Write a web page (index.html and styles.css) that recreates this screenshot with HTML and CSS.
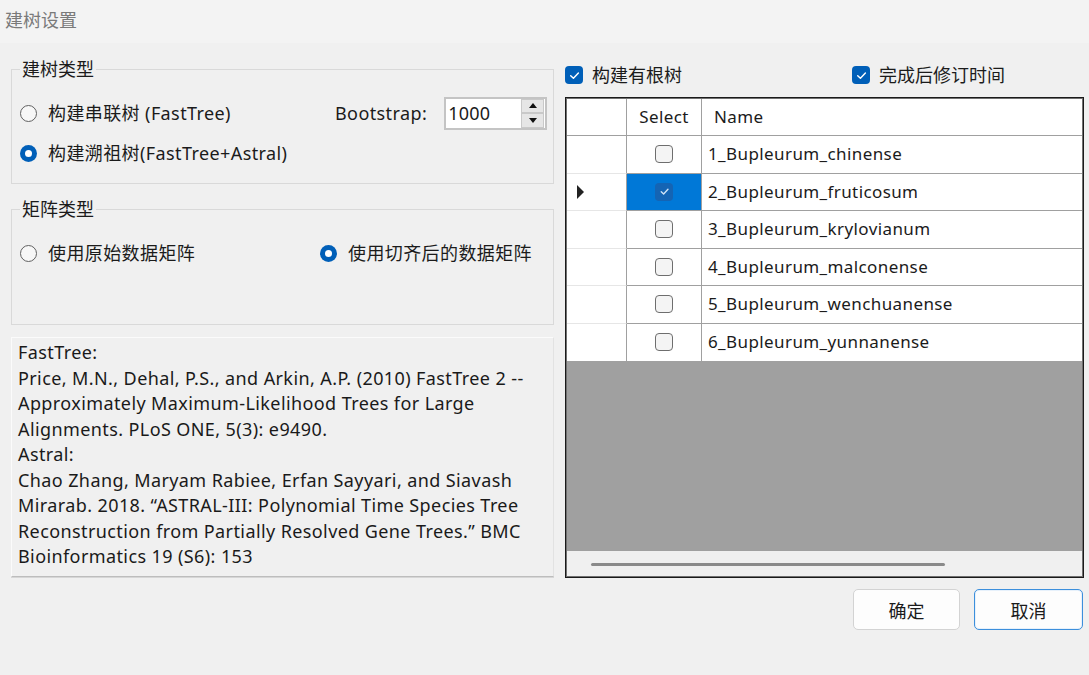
FILE: index.html
```html
<!DOCTYPE html>
<html lang="zh">
<head>
<meta charset="utf-8">
<title>建树设置</title>
<link rel="stylesheet" href="styles.css">
</head>
<body>
<div class="titlebar">建树设置</div>
<div class="main">
  <div class="left">
    <fieldset class="group g1">
      <legend>建树类型</legend>
      <div class="g1-grid">
        <label class="opt"><span class="radio"></span>构建串联树 (FastTree)</label>
        <span class="bs-label">Bootstrap:</span>
        <div class="spin">
          <span class="spin-val">1000</span>
          <div class="spin-btns">
            <span class="spin-btn"><span class="tri up"></span></span>
            <span class="spin-btn"><span class="tri down"></span></span>
          </div>
        </div>
        <label class="opt"><span class="radio on"></span>构建溯祖树(FastTree+Astral)</label>
      </div>
    </fieldset>
    <fieldset class="group g2">
      <legend>矩阵类型</legend>
      <div class="g2-grid">
        <label class="opt"><span class="radio"></span>使用原始数据矩阵</label>
        <label class="opt"><span class="radio on"></span>使用切齐后的数据矩阵</label>
      </div>
    </fieldset>
    <div class="refs">FastTree:<br>Price, M.N., Dehal, P.S., and Arkin, A.P. (2010) FastTree 2 --<br>Approximately Maximum-Likelihood Trees for Large<br>Alignments. PLoS ONE, 5(3): e9490.<br>Astral:<br>Chao Zhang, Maryam Rabiee, Erfan Sayyari, and Siavash<br>Mirarab. 2018. “ASTRAL-III: Polynomial Time Species Tree<br>Reconstruction from Partially Resolved Gene Trees.” BMC<br>Bioinformatics 19 (S6): 153</div>
  </div>
  <div class="right">
    <div class="checks">
      <label class="chk"><span class="cbox on"><svg viewBox="0 0 12 12"><polyline points="2.5,6.2 5,8.6 9.6,3.6"/></svg></span>构建有根树</label>
      <label class="chk"><span class="cbox on"><svg viewBox="0 0 12 12"><polyline points="2.5,6.2 5,8.6 9.6,3.6"/></svg></span>完成后修订时间</label>
    </div>
    <div class="grid">
      <div class="rows">
        <div class="rh hdr"></div><div class="cell sel hdr">Select</div><div class="cell name hdr hname">Name</div>

        <div class="rh"></div><div class="cell sel"><span class="gbox"></span></div><div class="cell name">1_Bupleurum_chinense</div>

        <div class="rh"><span class="arrow"></span></div><div class="cell sel current"><span class="gbox on"><svg viewBox="0 0 12 12"><polyline points="3,6.2 5.2,8.3 9.2,4"/></svg></span></div><div class="cell name">2_Bupleurum_fruticosum</div>

        <div class="rh"></div><div class="cell sel"><span class="gbox"></span></div><div class="cell name">3_Bupleurum_krylovianum</div>

        <div class="rh"></div><div class="cell sel"><span class="gbox"></span></div><div class="cell name">4_Bupleurum_malconense</div>

        <div class="rh"></div><div class="cell sel"><span class="gbox"></span></div><div class="cell name">5_Bupleurum_wenchuanense</div>

        <div class="rh"></div><div class="cell sel"><span class="gbox"></span></div><div class="cell name">6_Bupleurum_yunnanense</div>
      </div>
      <div class="empty"></div>
      <div class="hscroll"><span class="thumb"></span></div>
    </div>
    <div class="buttons">
      <button class="btn">确定</button>
      <button class="btn focus">取消</button>
    </div>
  </div>
</div>
</body>
</html>
```
FILE: styles.css
```css
* { box-sizing: border-box; }
html, body { margin: 0; padding: 0; }
body {
  width: 1089px;
  height: 675px;
  background: #f0f0f0;
  font-family: "Noto Sans", "Noto Sans CJK SC", sans-serif;
  font-size: 18px;
  letter-spacing: 0.4px;
  color: #1b1b1b;
  overflow: hidden;
}
.titlebar {
  height: 43px;
  background: #f3f3f3;
  color: #7a7a7a;
  padding-left: 5px;
  line-height: 40px;
  letter-spacing: 0;
}
.main {
  display: flex;
  padding-left: 11px;
  gap: 11px;
}
.left { width: 543px; }
.right { width: 519px; }

/* group boxes */
.group {
  margin: 0;
  border: 1px solid #d9d9d9;
  padding: 0 8px;
  min-width: 0;
}
.group legend {
  padding: 0 2px;
  margin-left: 0;
  line-height: 22px;
  height: 22px;
  letter-spacing: 0;
}
.g1 { margin-top: 15px; padding-top: 13px; padding-bottom: 10px; }
.g2 { margin-top: 14px; padding-top: 13px; padding-bottom: 51px; }

.g1-grid {
  display: grid;
  grid-template-columns: 315px auto 1fr;
  grid-auto-rows: 40px;
  align-items: center;
}
.bs-label { line-height: 22px; }
.spin {
  margin-left: 17px;
  width: 103px;
  height: 33px;
  background: #fff;
  border: 2px solid #c4c4c4;
  display: flex;
  align-items: center;
  justify-content: space-between;
  padding: 0 1px 0 2px;
}
.spin-val { line-height: 22px; letter-spacing: 0.2px; }
.spin-btns {
  display: flex;
  flex-direction: column;
  width: 23px;
  height: 29px;
}
.spin-btn {
  flex: 1;
  background: #e6e6e6;
  border: 1px solid #c9c9c9;
  display: flex;
  align-items: center;
  justify-content: center;
}
.tri { width: 0; height: 0; border-left: 4px solid transparent; border-right: 4px solid transparent; }
.tri.up { border-bottom: 5px solid #111; }
.tri.down { border-top: 5px solid #111; }

.g2-grid {
  display: grid;
  grid-template-columns: 300px 1fr;
  grid-auto-rows: 40px;
  align-items: center;
}
.opt {
  display: flex;
  align-items: center;
  gap: 11px;
  line-height: 22px;
  white-space: nowrap;
}
.radio {
  width: 17px;
  height: 17px;
  border-radius: 50%;
  border: 1px solid #616161;
  background: #f7f7f7;
  flex: none;
  display: flex;
  align-items: center;
  justify-content: center;
}
.radio.on {
  border: none;
  background: #005fb8;
}
.radio.on::after {
  content: "";
  width: 7px;
  height: 7px;
  border-radius: 50%;
  background: #fff;
}

/* references */
.refs {
  margin-top: 12px;
  height: 240px;
  border: 1px solid #fbfbfb;
  border-bottom-color: #bdbdbd;
  border-right-color: #e2e2e2;
  box-shadow: 0 1px 0 #d6d6d6;
  padding: 2px 6px 0;
  line-height: 25.5px;
  white-space: nowrap;
  color: #1a1a1a;
}

/* right side */
.checks {
  margin-top: 21px;
  height: 22px;
  display: grid;
  grid-template-columns: 287px 1fr;
  align-items: center;
}
.chk {
  display: flex;
  align-items: center;
  gap: 9px;
  line-height: 22px;
  white-space: nowrap;
  letter-spacing: 0;
}
.cbox {
  width: 18px;
  height: 18px;
  border-radius: 4px;
  flex: none;
  display: flex;
  align-items: center;
  justify-content: center;
}
.cbox.on { background: #005fb8; }
.cbox svg { width: 13px; height: 13px; }
.cbox svg polyline, .gbox svg polyline {
  fill: none;
  stroke: #fff;
  stroke-width: 1.3;
  stroke-linecap: round;
  stroke-linejoin: round;
}

.grid {
  margin-top: 11px;
  height: 481px;
  border: 1px solid #1a1a1a;
  box-shadow: inset 0 0 0 1px #707070;
  background: #fff;
  display: flex;
  flex-direction: column;
  padding: 1px;
  font-size: 17px;
  letter-spacing: 0.4px;
}
.rows {
  display: grid;
  grid-template-columns: 60px 75px 1fr;
  grid-template-rows: 37px repeat(6, 37.5px);
  background: #fff;
}
.rh {
  border-right: 1px solid #a0a0a0;
  border-bottom: 1px solid #e6e6e6;
  display: flex;
  align-items: center;
  padding-left: 10px;
}
.rh.hdr { border-bottom-color: #a0a0a0; }
.cell {
  border-right: 1px solid #a0a0a0;
  border-bottom: 1px solid #a0a0a0;
  display: flex;
  align-items: center;
  line-height: 22px;
  white-space: nowrap;
}
.cell.name { border-right: none; padding-left: 6px; }
.cell.hname { padding-left: 12px; }
.cell.sel { justify-content: center; }
.rows > :nth-last-child(-n+3) { border-bottom: none; }
.cell.current { background: #0078d7; }
.arrow {
  width: 0; height: 0;
  border-top: 7px solid transparent;
  border-bottom: 7px solid transparent;
  border-left: 7px solid #222;
}
.gbox {
  width: 18px;
  height: 18px;
  border-radius: 4px;
  border: 1px solid #6e6e6e;
  background: #f4f4f4;
  display: flex;
  align-items: center;
  justify-content: center;
}
.gbox.on {
  border: none;
  background: #1464b4;
}
.gbox svg { width: 13px; height: 13px; }
.gbox svg polyline { stroke: #cfe2f6; }

.empty {
  height: 190px;
  background: #a0a0a0;
}
.hscroll {
  flex: 1;
  background: #f0f0f0;
  padding-top: 12px;
  padding-left: 24px;
}
.thumb {
  display: block;
  width: 354px;
  height: 3px;
  border-radius: 2px;
  background: #8a8a8a;
}

.buttons {
  margin-top: 11px;
  display: flex;
  justify-content: flex-end;
  gap: 14px;
  padding-right: 1px;
}
.btn {
  width: 107px;
  height: 41px;
  background: #fdfdfd;
  border: 1px solid #d3d3d3;
  border-radius: 5px;
  font-family: "Noto Sans", "Noto Sans CJK SC", sans-serif;
  font-size: 18px;
  color: #1b1b1b;
  padding: 0;
}
.btn.focus {
  width: 109px;
  border: 1px solid #3c8fdc;
  box-shadow: inset 0 0 0 1px #e7f1fb;
}
```
